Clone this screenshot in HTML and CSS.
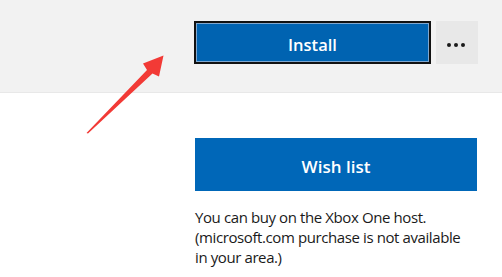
FILE: index.html
```html
<!DOCTYPE html>
<html>
<head>
<meta charset="utf-8">
<link rel="stylesheet" href="styles.css">
</head>
<body>
<div class="page">
  <div class="top">
    <button class="install">Install</button>
    <button class="more" aria-label="More"><span class="dot"></span><span class="dot"></span><span class="dot"></span></button>
  </div>
  <div class="main">
    <button class="wish">Wish list</button>
    <p class="note">You can buy on the Xbox One host.<br>(microsoft.com purchase is not available<br>in your area.)</p>
  </div>
  <svg class="arrow" width="502" height="277" viewBox="0 0 502 277">
    <path d="M86.5 133 L147 70 L143 63.5 L163.5 55.5 L159 76.5 L152.5 73.5 L88 133.5 Z" fill="#f23a36"/>
  </svg>
</div>
</body>
</html>
```
FILE: styles.css
```css
* { box-sizing: border-box; }
html, body { margin: 0; padding: 0; background: #fff; }
.page {
  position: relative;
  width: 502px;
  height: 277px;
  overflow: hidden;
  font-family: "Open Sans", "Noto Sans", sans-serif;
}
.top {
  height: 93px;
  background: #f2f2f2;
  border-bottom: 1px solid #e8e8e8;
  display: flex;
  align-items: flex-start;
  gap: 5px;
  padding: 21px 0 0 194px;
}
.install {
  width: 237px;
  height: 43px;
  border: 2px solid #111;
  background: #0063b1;
  box-shadow: inset 0 0 0 1px #7fa7cf;
  color: #fff;
  font-family: inherit;
  font-size: 16.5px;
  font-weight: 600;
  padding: 4px 0 0 0;
  margin: 0;
}
.more {
  width: 42px;
  height: 43px;
  border: 0;
  margin: 0;
  padding: 5px 2px 0 0;
  background: #e8e8e8;
  display: flex;
  align-items: center;
  justify-content: center;
  gap: 3px;
}
.dot {
  width: 4px;
  height: 4px;
  border-radius: 50%;
  background: #1a1a1a;
}
.main {
  padding: 45px 0 0 195px;
}
.wish {
  display: block;
  width: 282px;
  height: 53px;
  border: 0;
  margin: 0;
  background: #0067b8;
  color: #fff;
  font-family: inherit;
  font-size: 17px;
  font-weight: 600;
  padding: 3px 0 0 0;
}
.note {
  margin: 16px 0 0 0;
  font-size: 15px;
  line-height: 20px;
  letter-spacing: -0.4px;
  color: #1a1a1a;
}
.arrow {
  position: absolute;
  left: 0;
  top: 0;
  pointer-events: none;
}
```
